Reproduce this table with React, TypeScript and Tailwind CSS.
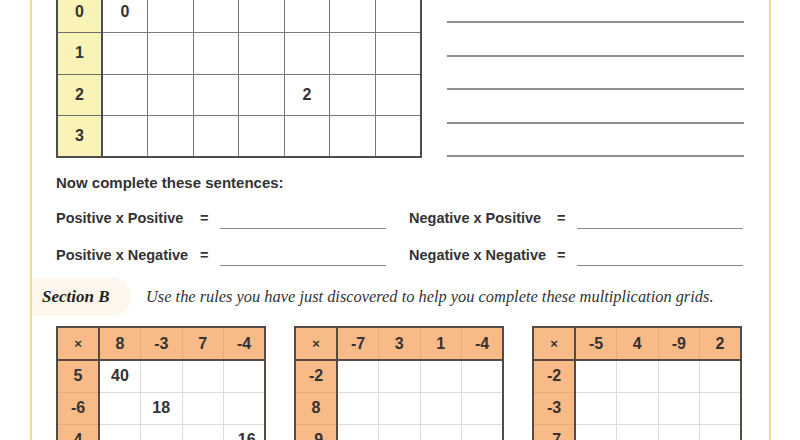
import React from "react";

const SANS = "font-['Liberation_Sans',Arial,sans-serif]";
const SERIF = "font-['Liberation_Serif','Times_New_Roman',serif]";

function TopGrid() {
  const rows = [
    ["0", "0", "", "", "", "", "", ""],
    ["1", "", "", "", "", "", "", ""],
    ["2", "", "", "", "", "2", "", ""],
    ["3", "", "", "", "", "", "", ""],
  ];
  return (
    <table className="border-collapse border-2 border-[#4d4d4d] -mt-[10px] shrink-0 table-fixed w-[366px]">
      <tbody>
        {rows.map((r, i) => (
          <tr key={i} className="h-[41.5px]">
            {r.map((c, j) =>
              j === 0 ? (
                <td
                  key={j}
                  className="w-[45px] p-0 bg-[#faf3b7] border-r-2 border-r-[#4d4d4d] border-b border-b-[#6b6b6b] text-center text-[16px] font-bold text-[#333]"
                >
                  {c}
                </td>
              ) : (
                <td
                  key={j}
                  className="p-0 border border-[#7a7a7a] text-center text-[16px] font-bold text-[#333]"
                >
                  {c}
                </td>
              )
            )}
          </tr>
        ))}
      </tbody>
    </table>
  );
}

function MulGrid({ head, rows }: { head: string[]; rows: string[][] }) {
  return (
    <table className="border-collapse border-2 border-[#574a42] w-[210px] table-fixed shrink-0">
      <tbody>
        <tr className="h-[33px] bg-[#f8bb88]">
          <td className="w-[42px] p-0 text-center text-[13px] font-bold text-[#333] border-r-2 border-r-[#574a42] border-b-2 border-b-[#574a42]">
            ×
          </td>
          {head.map((h, j) => (
            <td
              key={j}
              className="p-0 text-center text-[16px] font-bold text-[#333] border-l border-l-[#eaa878] border-b-2 border-b-[#574a42]"
            >
              {h}
            </td>
          ))}
        </tr>
        {rows.map((r, i) => (
          <tr key={i} className="h-[32px]">
            <td className="p-0 bg-[#f8bb88] text-center text-[16px] font-bold text-[#333] border-r-2 border-r-[#574a42] border-t border-t-[#eaa878]">
              {r[0]}
            </td>
            {r.slice(1).map((c, j) => (
              <td
                key={j}
                className="p-0 text-center text-[16px] font-bold text-[#333] border border-[#dcdcdc]"
              >
                {c}
              </td>
            ))}
          </tr>
        ))}
      </tbody>
    </table>
  );
}

function Sentence({ label, rightLabel }: { label: string; rightLabel: string }) {
  return (
    <div className="flex items-start text-[14.5px] font-bold text-[#333] whitespace-pre">
      <span className="w-[144px] h-[21px] leading-[21px]">{label}</span>
      <span className="w-[20px] h-[21px] leading-[21px]">=</span>
      <span className="w-[166px] h-[21px] border-b border-[#8a8a8a]" />
      <span className="w-[23px]" />
      <span className="w-[148px] h-[21px] leading-[21px]">{rightLabel}</span>
      <span className="w-[20px] h-[21px] leading-[21px]">=</span>
      <span className="w-[166px] h-[21px] border-b border-[#8a8a8a]" />
    </div>
  );
}

export default function App() {
  return (
    <div className={`w-[800px] h-[440px] overflow-hidden bg-white ${SANS}`}>
      <div className="ml-[30px] w-[741px] h-[440px] border-l-2 border-r-2 border-[#f5d992]">
        <div className="pl-[24px]">
          <div className="flex">
            <TopGrid />
            <div className="ml-[25px] pt-[21px] flex flex-col gap-[31.5px]">
              {[0, 1, 2, 3, 4].map((i) => (
                <div key={i} className="w-[297px] h-[2px] bg-[#8f8f8f]" />
              ))}
            </div>
          </div>
          <div className="mt-[14px] text-[15px] leading-[21px] font-bold text-[#333]">
            Now complete these sentences:
          </div>
          <div className="mt-[15px] flex flex-col gap-[16px]">
            <Sentence label="Positive x Positive" rightLabel="Negative x Positive" />
            <Sentence label="Positive x Negative" rightLabel="Negative x Negative" />
          </div>
        </div>
        <div className="mt-[12px] flex items-center">
          <div className="w-[99px] h-[38px] bg-[#fdf6ec] rounded-r-[19px] pl-[10px] flex items-center">
            <span className={`${SERIF} italic font-bold text-[17px] text-[#222]`}>Section B</span>
          </div>
          <span className={`${SERIF} italic text-[16.4px] text-[#333] ml-[15px]`}>
            Use the rules you have just discovered to help you complete these multiplication grids.
          </span>
        </div>
        <div className="mt-[10px] pl-[24px] flex gap-[28px]">
          <MulGrid
            head={["8", "-3", "7", "-4"]}
            rows={[
              ["5", "40", "", "", ""],
              ["-6", "", "18", "", ""],
              ["4", "", "", "", "-16"],
            ]}
          />
          <MulGrid
            head={["-7", "3", "1", "-4"]}
            rows={[
              ["-2", "", "", "", ""],
              ["8", "", "", "", ""],
              ["-9", "", "", "", ""],
            ]}
          />
          <MulGrid
            head={["-5", "4", "-9", "2"]}
            rows={[
              ["-2", "", "", "", ""],
              ["-3", "", "", "", ""],
              ["-7", "", "", "", ""],
            ]}
          />
        </div>
      </div>
    </div>
  );
}
